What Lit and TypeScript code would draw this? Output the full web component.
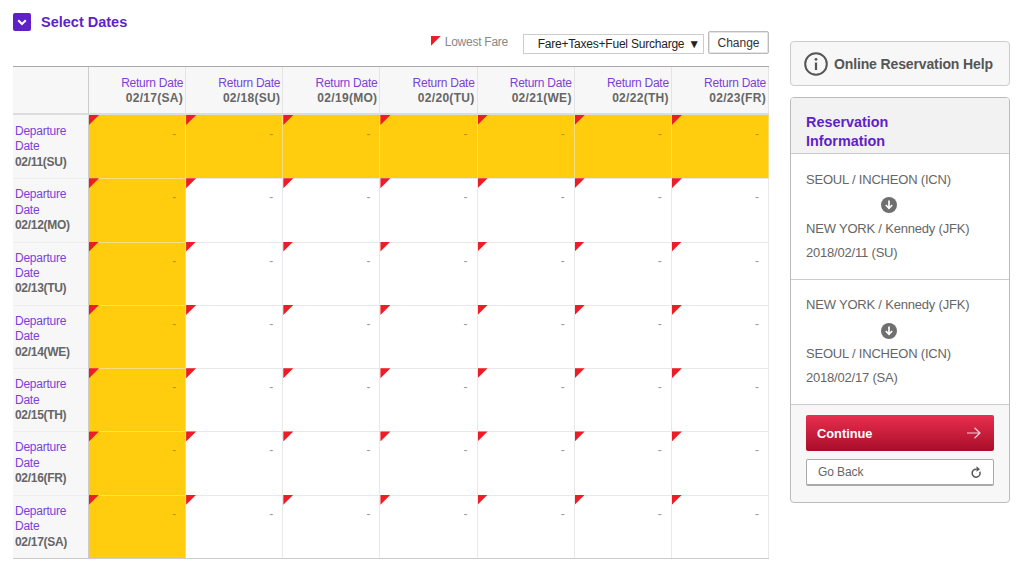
import { LitElement, css, html } from "lit";
import { customElement } from "lit/decorators.js";

const returns = ["02/17(SA)", "02/18(SU)", "02/19(MO)", "02/20(TU)", "02/21(WE)", "02/22(TH)", "02/23(FR)"];
const departs = ["02/11(SU)", "02/12(MO)", "02/13(TU)", "02/14(WE)", "02/15(TH)", "02/16(FR)", "02/17(SA)"];

const downIcon = html`<svg width="16" height="16" viewBox="0 0 16 16">
  <circle cx="8" cy="8" r="8" fill="#6f6f6f"></circle>
  <path d="M8 3.6v7.6M4.8 8l3.2 3.3L11.2 8" fill="none" stroke="#fff" stroke-width="1.7"></path>
</svg>`;

@customElement("app-root")
export class AppRoot extends LitElement {
  static styles = css`
    :host {
      display: block;
      width: 1024px;
      height: 567px;
      overflow: hidden;
      background: #fff;
      font-family: "Liberation Sans", Arial, sans-serif;
      font-size: 12px;
      color: #666;
    }
    .page {
      display: flex;
      align-items: flex-start;
      padding: 13px 0 0 13px;
      gap: 21px;
    }
    .main {
      width: 756px;
      flex: none;
    }
    .title {
      display: flex;
      align-items: center;
      gap: 10px;
      height: 18px;
      font-size: 14.5px;
      font-weight: bold;
      color: #5f1fc9;
    }
    .toggle {
      width: 18px;
      height: 18px;
      border-radius: 2px;
      background: #5f1fc9;
      display: flex;
      align-items: center;
      justify-content: center;
    }
    .tools {
      display: flex;
      justify-content: flex-end;
      align-items: flex-end;
      height: 23px;
    }
    .legend {
      display: flex;
      align-items: center;
      gap: 4px;
      margin: 0 15px 5px 0;
      letter-spacing: -0.25px;
      color: #888;
    }
    .legend i {
      width: 10px;
      height: 10px;
      background: #ee1c25;
      clip-path: polygon(0 0, 100% 0, 0 100%);
      margin-top: -2px;
    }
    .select {
      width: 181px;
      height: 20px;
      box-sizing: border-box;
      border: 1px solid #ccc;
      display: flex;
      align-items: center;
      justify-content: flex-end;
      gap: 4px;
      padding-right: 3px;
      color: #222;
      letter-spacing: -0.22px;
    }
    .change {
      width: 61px;
      height: 23px;
      box-sizing: border-box;
      margin-left: 4px;
      border: 1px solid #bbb;
      border-radius: 2px;
      background: #fff;
      box-shadow: inset 0 0 0 1px #e4e4e4;
      color: #333;
      font: 12px "Liberation Sans", Arial, sans-serif;
      padding: 0;
    }
    .grid {
      display: grid;
      grid-template-columns: 76px repeat(7, 1fr);
      grid-template-rows: 48px repeat(7, 63.3px);
      margin-top: 12px;
      border-top: 1px solid #aaa;
      border-bottom: 1px solid #ccc;
    }
    .corner,
    .head {
      background: #f7f7f7;
      border-bottom: 2px solid #ddd;
      box-sizing: border-box;
    }
    .corner {
      border-right: 1px solid #ccc;
    }
    .head {
      border-right: 1px solid #e4e4e4;
      text-align: right;
      padding: 9px 2px 0 0;
      line-height: 15px;
    }
    .link {
      color: #7c3fd8;
      display: block;
      letter-spacing: -0.25px;
    }
    .date {
      font-weight: bold;
      color: #666;
      display: block;
      letter-spacing: -0.3px;
    }
    .head .date {
      letter-spacing: 0.3px;
    }
    .side {
      background: #f7f7f7;
      border-right: 1px solid #ccc;
      border-top: 1px solid #eee;
      box-sizing: border-box;
      padding: 8px 0 0 2px;
      line-height: 15.4px;
    }
    .cell {
      position: relative;
      box-sizing: border-box;
      border-right: 1px solid #e8e8e8;
      border-top: 1px solid #e8e8e8;
      text-align: right;
      padding: 10px 9px 0 0;
      color: #999;
      line-height: 16px;
    }
    .cell.low {
      background: #ffcd0d;
      border-color: #f5dc7e;
      color: #a8952c;
    }
    .side.top,
    .cell.top {
      border-top-color: transparent;
    }
    .flag {
      position: absolute;
      left: 0;
      top: -1px;
      width: 10px;
      height: 10px;
      background: #ee1c25;
      clip-path: polygon(0 0, 100% 0, 0 100%);
    }
    aside {
      width: 220px;
      flex: none;
      margin-top: 28px;
    }
    .help {
      height: 45px;
      box-sizing: border-box;
      border: 1px solid #ccc;
      border-radius: 4px;
      background: #f7f7f7;
      display: flex;
      align-items: center;
      gap: 6px;
      padding-left: 13px;
      font-size: 14px;
      letter-spacing: -0.13px;
      font-weight: bold;
      color: #555;
    }
    .info {
      margin-top: 11px;
      height: 406px;
      box-sizing: border-box;
      border: 1px solid #bbb;
      border-radius: 4px;
      background: #f7f7f7;
      overflow: hidden;
    }
    .info h2 {
      margin: 0;
      height: 55px;
      box-sizing: border-box;
      padding: 15px 60px 0 15px;
      background: #f2f2f2;
      font-size: 14.4px;
      line-height: 19px;
      color: #5f1fc9;
    }
    .leg {
      background: #fff;
      border-top: 1px solid #ccc;
      height: 126px;
      box-sizing: border-box;
      padding: 18px 15px 0;
      font-size: 13px;
      letter-spacing: -0.2px;
      color: #666;
      line-height: 15px;
    }
    .leg + .leg {
      height: 125px;
      padding-top: 17px;
    }
    .leg p {
      margin: 0;
    }
    .arrow {
      display: flex;
      justify-content: center;
      padding-right: 22px;
      margin: 10px 0 8px;
      height: 16px;
    }
    .leg + .leg .arrow {
      margin: 11px 0 7px;
    }
    .leg .when {
      margin-top: 9px;
    }
    .actions {
      border-top: 1px solid #ccc;
      padding: 10px 15px 0;
      display: flex;
      flex-direction: column;
      gap: 8px;
    }
    .go {
      height: 36px;
      border-radius: 2px;
      background: linear-gradient(#e92f4e, #a80d2a);
      color: #fff;
      font-size: 12.8px;
      font-weight: bold;
      display: flex;
      align-items: center;
      justify-content: space-between;
      padding: 0 13px 0 11px;
    }
    .back {
      height: 27px;
      box-sizing: border-box;
      border: 1px solid #aaa;
      border-bottom-width: 2px;
      border-radius: 2px;
      background: #fff;
      color: #666;
      letter-spacing: -0.1px;
      line-height: 13px;
      display: flex;
      align-items: center;
      justify-content: space-between;
      padding: 1px 11px 0;
    }
  `;

  render() {
    return html`
      <div class="page">
        <div class="main">
          <div class="title">
            <span class="toggle">
              <svg width="10" height="7" viewBox="0 0 10 7"><path d="M1.2 1.2 5 5l3.800-3.800" fill="none" stroke="#fff" stroke-width="2"></path></svg>
            </span>
            Select Dates
          </div>
          <div class="tools">
            <span class="legend"><i></i>Lowest Fare</span>
            <div class="select">Fare+Taxes+Fuel Surcharge <span>▼</span></div>
            <button class="change">Change</button>
          </div>
          <div class="grid">
            <div class="corner"></div>
            ${returns.map((r) => html`<div class="head"><span class="link">Return Date</span><span class="date">${r}</span></div>`)}
            ${departs.map((d, row) => html`
              <div class="side ${row === 0 ? "top" : ""}"><span class="link">Departure Date</span><span class="date">${d}</span></div>
              ${returns.map((_, col) => html`<div class="cell ${row === 0 || col === 0 ? "low" : ""} ${row === 0 ? "top" : ""}"><span class="flag"></span>-</div>`)}
            `)}
          </div>
        </div>
        <aside>
          <div class="help">
            <svg width="24" height="24" viewBox="0 0 24 24">
              <circle cx="12" cy="12" r="10.8" fill="none" stroke="#555" stroke-width="2"></circle>
              <circle cx="12" cy="7.3" r="1.4" fill="#555"></circle>
              <path d="M12 10.500v7.500" stroke="#555" stroke-width="2.200"></path>
            </svg>
            Online Reservation Help
          </div>
          <div class="info">
            <h2>Reservation Information</h2>
            <div class="leg">
              <p>SEOUL / INCHEON (ICN)</p>
              <div class="arrow">${downIcon}</div>
              <p>NEW YORK / Kennedy (JFK)</p>
              <p class="when">2018/02/11 (SU)</p>
            </div>
            <div class="leg">
              <p>NEW YORK / Kennedy (JFK)</p>
              <div class="arrow">${downIcon}</div>
              <p>SEOUL / INCHEON (ICN)</p>
              <p class="when">2018/02/17 (SA)</p>
            </div>
            <div class="actions">
              <div class="go">
                Continue
                <svg width="14" height="12" viewBox="0 0 14 12"><path d="M0 6h13M7.500 .7 13 6l-5.500 5.300" fill="none" stroke="#f3d0d6" stroke-width="1.200"></path></svg>
              </div>
              <div class="back">
                Go Back
                <svg width="11" height="13" viewBox="0 0 11 13"><path d="M8.800 5.600A4 4 0 1 1 5.500 3.200" fill="none" stroke="#555" stroke-width="1.500"></path><path d="M5.500 .3 9 3.200 5.500 5.700z" fill="#555"></path></svg>
              </div>
            </div>
          </div>
        </aside>
      </div>
    `;
  }
}
